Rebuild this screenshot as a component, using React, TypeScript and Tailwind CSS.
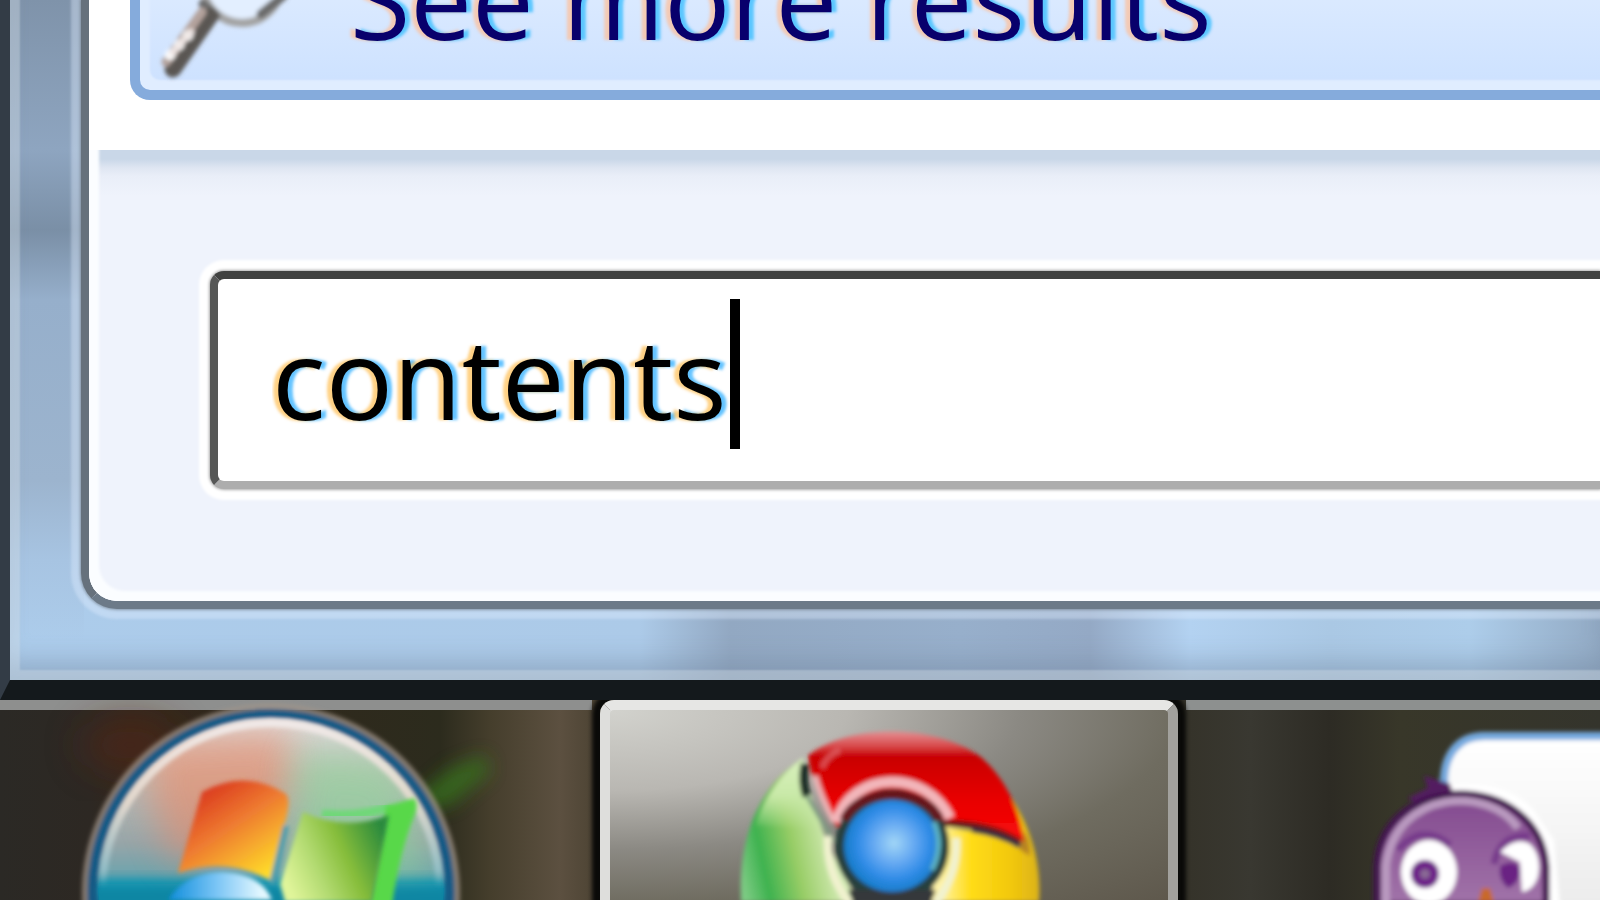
import { useState } from "react";

function MagnifierIcon() {
  return (
    <svg className="w-40 h-[186px] flex-shrink-0" viewBox="141 -96 160 186" aria-hidden="true">
      <defs>
        <filter id="magSoft" x="-20%" y="-20%" width="140%" height="140%">
          <feGaussianBlur stdDeviation="2" />
        </filter>
      </defs>
      <g filter="url(#magSoft)" fill="none">
        <circle cx="243" cy="-16" r="39" stroke="#a3a3a3" strokeWidth="8" fill="#e3efff" />
        <path d="M204 4 L217 16 M262 14 L284 -4" stroke="#6b6b6b" strokeWidth="9" strokeLinecap="round" />
        <path d="M174 69 L211 16" stroke="#5a5653" strokeWidth="17" strokeLinecap="round" />
        <path d="M167 62 L203 12" stroke="#b3a29c" strokeWidth="9" strokeLinecap="round" />
        <path d="M171 55 L194 30" stroke="#fff" strokeWidth="10" strokeLinecap="round" strokeDasharray="1 12" />
        <path d="M171 55 L194 30" stroke="#efe6e4" strokeWidth="6" />
      </g>
    </svg>
  );
}

function StartOrb() {
  return (
    <svg className="w-[592px] h-[200px]" viewBox="0 700 592 200" aria-hidden="true">
      <defs>
        <filter id="soft" x="-10%" y="-10%" width="120%" height="120%">
          <feGaussianBlur stdDeviation="2" />
        </filter>
        <filter id="glow" x="-50%" y="-50%" width="200%" height="200%">
          <feGaussianBlur stdDeviation="18" />
        </filter>
        <filter id="beam" x="-50%" y="-50%" width="200%" height="200%">
          <feGaussianBlur stdDeviation="9" />
        </filter>
        <linearGradient id="orbBody" x1="0" y1="712" x2="0" y2="900" gradientUnits="userSpaceOnUse">
          <stop offset="0" stopColor="#e6e2e2" />
          <stop offset="0.35" stopColor="#bdbdb8" />
          <stop offset="0.7" stopColor="#97a5a8" />
          <stop offset="0.86" stopColor="#6fa4ad" />
          <stop offset="0.93" stopColor="#10a0bd" />
          <stop offset="1" stopColor="#0787a8" />
        </linearGradient>
        <linearGradient id="orbRim" x1="0" y1="720" x2="0" y2="886" gradientUnits="userSpaceOnUse">
          <stop offset="0" stopColor="#f1eae9" />
          <stop offset="0.5" stopColor="#e8dcd0" stopOpacity="0.9" />
          <stop offset="0.9" stopColor="#9fc8d2" stopOpacity="0.7" />
          <stop offset="1" stopColor="#9fc8d2" stopOpacity="0" />
        </linearGradient>
        <linearGradient id="redPane" x1="200" y1="785" x2="262" y2="878" gradientUnits="userSpaceOnUse">
          <stop offset="0" stopColor="#d8321c" />
          <stop offset="0.45" stopColor="#ee7a30" />
          <stop offset="1" stopColor="#ffdc2a" />
        </linearGradient>
        <linearGradient id="greenPane" x1="285" y1="880" x2="385" y2="835" gradientUnits="userSpaceOnUse">
          <stop offset="0" stopColor="#e0f59a" />
          <stop offset="0.3" stopColor="#b3db72" />
          <stop offset="0.6" stopColor="#86bd3a" />
          <stop offset="1" stopColor="#2a8a3c" />
        </linearGradient>
        <linearGradient id="bluePane" x1="170" y1="0" x2="262" y2="0" gradientUnits="userSpaceOnUse">
          <stop offset="0" stopColor="#128fdc" />
          <stop offset="0.5" stopColor="#79c4f5" />
          <stop offset="1" stopColor="#e4f8ff" />
        </linearGradient>
        <clipPath id="orbClip">
          <circle cx="271" cy="892" r="172" />
        </clipPath>
      </defs>
      <ellipse cx="130" cy="745" rx="50" ry="28" fill="#5a2612" opacity="0.5" filter="url(#glow)" />
      <path d="M400 810 L450 768 L485 755 L490 772 L450 806 Z" fill="#37751a" opacity="0.75" filter="url(#beam)" />
      <g filter="url(#soft)">
        <circle cx="271" cy="893" r="189" fill="#a3958a" opacity="0.75" />
        <circle cx="271" cy="893" r="184" fill="#155a85" />
        <circle cx="271" cy="892" r="173" fill="url(#orbBody)" />
      </g>
      <g clipPath="url(#orbClip)">
        <path d="M150 740 L290 730 L290 800 L180 870 L150 800 Z" fill="#ee8a68" opacity="0.6" filter="url(#glow)" />
        <path d="M300 750 L400 760 L430 880 L290 880 Z" fill="#8fd89a" opacity="0.6" filter="url(#glow)" />
        <path d="M80 884 H460 V912 H80 Z" fill="#0a85a2" filter="url(#beam)" />
      </g>
      <path d="M102 892 A169 169 0 0 1 440 892" fill="none" stroke="url(#orbRim)" strokeWidth="8" filter="url(#soft)" />
      <path d="M322 814 Q360 818 392 806" fill="none" stroke="#6fd878" strokeWidth="9" filter="url(#soft)" />
      <path d="M386 806 Q402 802 414 798 Q419 804 415 814 Q400 850 392 905 H370 Z" fill="#58d84a" filter="url(#soft)" />
      <g filter="url(#soft)">
        <path d="M202 792 Q245 768 286 794 Q290 800 287 814 L270 880 Q225 856 178 873 Z" fill="url(#redPane)" />
        <path d="M303 812 Q345 832 389 815 L372 902 H285 L280 884 Z" fill="url(#greenPane)" />
        <path d="M168 900 Q186 872 222 872 Q262 874 272 900 Z" fill="url(#bluePane)" />
        <path d="M286 826 L272 884" stroke="#4f9dac" strokeWidth="6" />
      </g>
    </svg>
  );
}

function ChromeIcon() {
  return (
    <svg className="w-[558px] h-[190px]" viewBox="610 710 558 190" aria-hidden="true">
      <defs>
        <filter id="chSoft" x="-10%" y="-10%" width="120%" height="120%">
          <feGaussianBlur stdDeviation="2" />
        </filter>
        <linearGradient id="chRed" x1="0" y1="732" x2="0" y2="840" gradientUnits="userSpaceOnUse">
          <stop offset="0" stopColor="#e48d90" />
          <stop offset="0.13" stopColor="#d84a4c" />
          <stop offset="0.22" stopColor="#c80205" />
          <stop offset="0.6" stopColor="#e60000" />
          <stop offset="1" stopColor="#fb0b0b" />
        </linearGradient>
        <linearGradient id="chGreen" x1="742" y1="880" x2="835" y2="860" gradientUnits="userSpaceOnUse">
          <stop offset="0" stopColor="#7ccb83" />
          <stop offset="0.25" stopColor="#3eb24f" />
          <stop offset="0.6" stopColor="#98cd66" />
          <stop offset="1" stopColor="#d3eab4" />
        </linearGradient>
        <linearGradient id="chGreenTop" x1="0" y1="760" x2="0" y2="830" gradientUnits="userSpaceOnUse">
          <stop offset="0" stopColor="#d9f0bd" />
          <stop offset="0.5" stopColor="#c9e9a8" />
          <stop offset="1" stopColor="#c9e9a8" stopOpacity="0" />
        </linearGradient>
        <linearGradient id="chYellow" x1="940" y1="0" x2="1042" y2="0" gradientUnits="userSpaceOnUse">
          <stop offset="0" stopColor="#fff3a8" />
          <stop offset="0.3" stopColor="#ffdc18" />
          <stop offset="0.7" stopColor="#f2c80c" />
          <stop offset="1" stopColor="#d9b01c" />
        </linearGradient>
        <radialGradient id="chBlue" cx="894" cy="843" r="52" gradientUnits="userSpaceOnUse">
          <stop offset="0" stopColor="#a2d6f6" />
          <stop offset="0.4" stopColor="#64a8f2" />
          <stop offset="0.7" stopColor="#2f8be6" />
          <stop offset="1" stopColor="#1279c4" />
        </radialGradient>
      </defs>
      <g filter="url(#chSoft)">
        <path d="M803 758 C760 785 738 835 741 902 H858 C842 870 815 830 803 758 Z" fill="url(#chGreen)" />
        <path d="M803 758 C785 770 765 795 756 825 L824 830 C812 805 806 785 803 758 Z" fill="url(#chGreenTop)" />
        <path d="M944 826 L1000 836 L1010 796 C1030 826 1042 862 1039 902 H930 Z" fill="url(#chYellow)" />
        <path d="M1020 830 Q1030 834 1030 856 L1020 850 Z" fill="#b88422" />
        <path d="M808 756 C845 724 935 722 982 758 C1008 782 1020 812 1024 842 Q985 824 944 826 L836 826 C820 800 812 780 808 756 Z" fill="url(#chRed)" />
        <path d="M805 764 C803 776 803 786 807 796" fill="none" stroke="#1c2f28" strokeWidth="9" />
        <path d="M807 796 L834 842" fill="none" stroke="#7f9c82" strokeWidth="4" />
        <path d="M815 776 Q820 796 834 822" fill="none" stroke="#eab0b2" strokeWidth="6" />
        <path d="M822 768 Q826 756 840 750" fill="none" stroke="#e06a6c" strokeWidth="6" opacity="0.7" />
        <path d="M836 822 C852 770 926 768 950 818" fill="none" stroke="#f3b6ba" strokeWidth="10" />
        <path d="M942 823 Q988 822 1020 842" fill="none" stroke="#6b1712" strokeWidth="6" />
        <path d="M972 830 Q1000 834 1020 846" fill="none" stroke="#2f3346" strokeWidth="5" />
        <path d="M828 836 C826 868 838 888 850 904 M956 838 C958 866 948 886 936 904" fill="none" stroke="#f1f2cf" strokeWidth="8" />
        <circle cx="892" cy="846" r="57" fill="#283f3e" />
        <path d="M844 820 C858 786 926 786 940 820" fill="none" stroke="#66161c" strokeWidth="9" />
        <path d="M848 890 H936 L930 904 H854 Z" fill="#34383a" />
        <ellipse cx="892" cy="846" rx="48" ry="46" fill="url(#chBlue)" />
        <path d="M934 822 Q944 846 932 870" fill="none" stroke="#5cb3c4" strokeWidth="5" />
      </g>
    </svg>
  );
}

function PidginIcon() {
  return (
    <svg className="w-[250px] h-[190px]" viewBox="1350 710 250 190" aria-hidden="true">
      <defs>
        <filter id="pgSoft" x="-10%" y="-10%" width="120%" height="120%">
          <feGaussianBlur stdDeviation="2" />
        </filter>
        <linearGradient id="bubble" x1="0" y1="740" x2="0" y2="900" gradientUnits="userSpaceOnUse">
          <stop offset="0" stopColor="#ffffff" />
          <stop offset="0.5" stopColor="#f6f6f6" />
          <stop offset="1" stopColor="#ececec" />
        </linearGradient>
        <linearGradient id="bird" x1="0" y1="800" x2="0" y2="900" gradientUnits="userSpaceOnUse">
          <stop offset="0" stopColor="#844b90" />
          <stop offset="1" stopColor="#a072a8" />
        </linearGradient>
      </defs>
      <g filter="url(#pgSoft)">
        <path d="M1444 782 C1444 755 1458 736 1484 736 H1660 V950 H1500 Z" fill="url(#bubble)" stroke="#75a9de" strokeWidth="8" />
        <path d="M1452 784 Q1505 780 1532 808 L1554 840 L1560 905 H1470 Z" fill="#fff" />
        <path d="M1408 798 L1428 788 L1424 776 L1438 780 L1450 784 L1454 798 L1420 806 Z" fill="#521a60" />
        <path d="M1377 905 V866 C1382 770 1538 770 1546 866 V905 Z" fill="url(#bird)" stroke="#43174f" strokeWidth="7" />
        <path d="M1386 905 V866 C1396 788 1490 786 1518 828" fill="none" stroke="#b99abf" strokeWidth="8" />
        <path d="M1398 850 Q1422 822 1450 845 M1494 864 Q1500 834 1530 836" fill="none" stroke="#773b8b" strokeWidth="7" />
        <ellipse cx="1429" cy="872" rx="28" ry="32" fill="#fff" />
        <path d="M1500 852 Q1516 836 1530 844 Q1542 856 1538 876 Q1534 890 1522 892 L1520 862 Z" fill="#fff" />
        <circle cx="1425" cy="874" r="14" fill="#6d2488" />
        <circle cx="1425" cy="874" r="5" fill="#8a6a94" />
        <path d="M1500 866 Q1514 858 1520 868 Q1520 884 1508 888 Q1498 880 1500 866 Z" fill="#6a2383" />
        <path d="M1478 902 L1482 888 H1490 L1494 902 Z" fill="#c8692c" />
      </g>
    </svg>
  );
}

function StartMenu() {
  const [query, setQuery] = useState("contents");

  return (
    <section className="flex-shrink-0 border-l-[10px] border-b-[20px] border-l-[#333c46] border-b-[#14191c] bg-[#accae8]">
      {/* Glass frame */}
      <div className="pl-[71px] pb-[71px] shadow-[inset_10px_-10px_2px_rgba(215,225,232,0.4),inset_0_-26px_24px_-8px_rgba(110,130,155,0.45)] bg-no-repeat bg-[image:linear-gradient(to_bottom,#7f93aa_0px,#8ea5c0_150px,#7a8fa6_230px,#96afcb_300px,#9cb4ce_480px,#a7c4e2_560px,transparent_640px),linear-gradient(to_right,#accceb_0px,#accae8_630px,#92a8c2_720px,#97afcb_950px,#94a9c5_1080px,#b3d2f1_1180px,#aac8e4_1320px,#adcdea_1460px,#92aac4_100%)] bg-[size:74px_100%,100%_100%]">
        <div className="overflow-hidden bg-white border-l-8 border-b-8 border-l-[#66717c] border-b-[#6c7a88] rounded-bl-[36px] shadow-[0_0_3px_1px_rgba(108,122,136,0.7),0_0_3px_10px_rgba(225,238,255,0.4)]">
          {/* Results */}
          <div className="pl-[41px] pb-[50px]">
            <button
              type="button"
              className="-mt-[106px] flex w-full h-[206px] items-center border-[10px] border-r-0 border-[#85abdc] rounded-l-[20px] bg-linear-to-b from-[#e9f2ff] to-[#cce1ff] shadow-[inset_10px_-10px_2px_#e0edff]"
            >
              <MagnifierIcon />
              <span className="ml-[50px] whitespace-nowrap font-['Open_Sans','Noto_Sans',sans-serif] text-[110px] leading-none text-[#08006c] [text-shadow:-5px_0_3px_rgba(255,190,150,0.7),5px_0_3px_rgba(60,190,255,0.8)]">
                See more results
              </span>
            </button>
          </div>

          {/* Search */}
          <div className="pl-[121px] pt-[121px] pb-28 bg-[linear-gradient(to_bottom,#c9d7e8_0px,#c9d7e8_9px,#dfe6f2_18px,#e9eef8_26px,#eff3fc_46px)] shadow-[inset_10px_-10px_3px_#fbfdff] rounded-bl-[26px]">
            <div className="relative">
              <input
                type="text"
                value={query}
                onChange={(e) => setQuery(e.target.value)}
                aria-label="Search"
                className="block w-full h-[218px] pl-[54px] pb-2 border-8 border-r-0 border-t-[#404140] border-l-[#565756] border-b-[#adadad] rounded-l-[14px] bg-white outline-none shadow-[0_0_3px_1px_#aaa,0_0_3px_11px_#fff] font-['Open_Sans','Noto_Sans',sans-serif] text-[112px] text-black [text-shadow:-5px_0_3px_rgba(255,190,80,0.7),5px_0_3px_rgba(60,180,255,0.8)]"
              />
              {/* Text cursor */}
              <span className="absolute top-7 left-[520px] w-[10px] h-[150px] bg-black" />
            </div>
          </div>
        </div>
      </div>
    </section>
  );
}

function Taskbar() {
  return (
    <nav className="flex flex-1 min-h-0 overflow-hidden bg-[linear-gradient(to_right,#2b2925_0px,#2d2823_90px,#33271c_130px,#2c2b1d_440px,#453e2c_490px,#5c5040_560px,#4b4232_600px,#35332a_1190px,#393831_1250px,#2d2b24_1330px,#383729_1400px,#34342c_100%)]">
      <button type="button" aria-label="Start" className="relative flex-shrink-0 w-[592px] h-[200px]">
        <span className="absolute inset-x-0 top-0 h-[10px] bg-[#8e8f8e]" />
        <span className="relative block">
          <StartOrb />
        </span>
      </button>
      <button
        type="button"
        aria-label="Google Chrome"
        className="relative flex-shrink-0 w-[578px] ml-2 h-[200px] border-[10px] border-b-0 border-t-[#e6e6e4] border-l-[#dededc] border-r-[#a2a19d] rounded-t-[14px] shadow-[0_0_4px_8px_#0a0a08] bg-[radial-gradient(ellipse_at_top_left,#d2d2cd_0%,#b9b7b2_30%,#8b8983_52%,#6f6c60_72%,#5e584c_100%)]"
      >
        <ChromeIcon />
      </button>
      <button type="button" aria-label="Pidgin" className="flex flex-1 justify-end ml-2 h-[200px] border-t-[10px] border-[#8d908f]">
        <PidginIcon />
      </button>
    </nav>
  );
}

export default function App() {
  return (
    <main className="flex flex-col h-screen overflow-hidden bg-[#14191c]">
      <StartMenu />
      <Taskbar />
    </main>
  );
}
